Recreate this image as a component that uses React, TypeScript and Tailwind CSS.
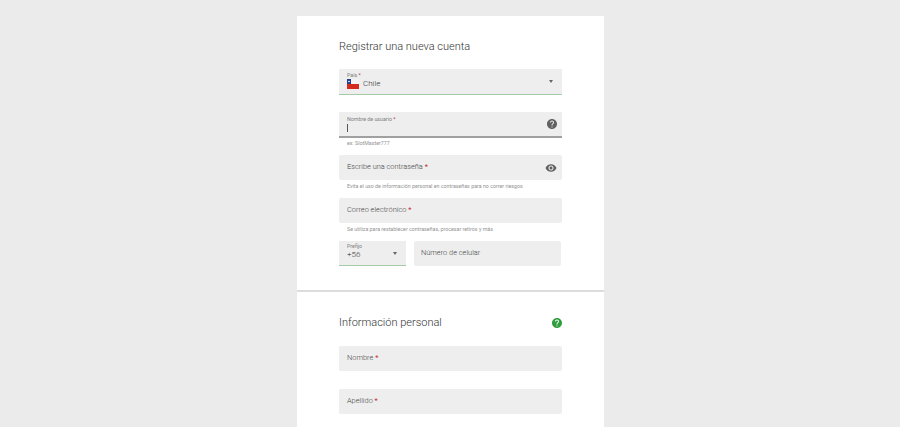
import { ReactNode } from "react";

function Req() {
  return <span className="font-normal text-[#c62828]"> *</span>;
}

function Help({ className }: { className: string }) {
  return (
    <svg viewBox="0 0 24 24" className={className} fill="currentColor">
      <path d="M12 2C6.48 2 2 6.48 2 12s4.48 10 10 10 10-4.48 10-10S17.52 2 12 2zm1 17h-2v-2h2v2zm2.07-7.75l-.9.92C13.45 12.9 13 13.5 13 15h-2v-.5c0-1.1.45-2.1 1.17-2.83l1.24-1.26c.37-.36.59-.86.59-1.41 0-1.1-.9-2-2-2s-2 .9-2 2H8c0-2.21 1.79-4 4-4s4 1.79 4 4c0 .88-.36 1.68-.93 2.25z" />
    </svg>
  );
}

function Eye() {
  return (
    <svg viewBox="0 0 24 24" className="h-[12px] w-[12px] text-[#616161]" fill="currentColor">
      <path d="M12 4.5C7 4.5 2.73 7.61 1 12c1.73 4.39 6 7.5 11 7.5s9.27-3.11 11-7.5c-1.73-4.39-6-7.5-11-7.5zM12 17c-2.76 0-5-2.24-5-5s2.24-5 5-5 5 2.24 5 5-2.24 5-5 5zm0-8c-1.66 0-3 1.34-3 3s1.34 3 3 3 3-1.34 3-3-1.34-3-3-3z" />
    </svg>
  );
}

function Caret() {
  return <span className="h-0 w-0 border-x-[2.5px] border-t-[3px] border-x-transparent border-t-[#666]" />;
}

function Flag() {
  return (
    <svg viewBox="0 0 12 10" className="h-[10px] w-[12px] shrink-0">
      <rect width="12" height="5" fill="#f2f2f2" />
      <rect y="5" width="12" height="5" fill="#d52b1e" />
      <rect width="4" height="5" fill="#1f3f94" />
      <circle cx="2" cy="2.5" r="0.8" fill="#fff" />
    </svg>
  );
}

function Field({ label, right, hint }: { label: string; right?: ReactNode; hint?: string }) {
  return (
    <div>
      <div className="flex h-[25px] items-center justify-between rounded-[2px] bg-[#eeeeee] pl-2 pr-[5px]">
        <span className="-mt-[1px] text-[7.4px] font-light text-[#444444]">
          {label}
          <Req />
        </span>
        {right}
      </div>
      {hint ? <p className="mt-[2px] pl-2 text-[5.3px] leading-[8px] text-[#949494]">{hint}</p> : null}
    </div>
  );
}

export default function App() {
  return (
    <div className="h-screen overflow-hidden bg-[#ebebeb] pt-4 font-['Roboto',sans-serif]">
      <div className="ml-[297px] h-[500px] w-[307px] bg-white">
        <section className="h-[276px] border-b-2 border-[#dcdcdc] px-[42px] pt-[23px]">
          <h1 className="text-[11px] font-light leading-[16px] text-[#333333]">Registrar una nueva cuenta</h1>

          <div className="mt-[14px] flex h-[26px] items-center justify-between border-b border-[#a3cba5] bg-[#eeeeee] pl-2 pr-[9px]">
            <div className="-mt-[3px]">
              <div className="text-[5.3px] leading-[6px] text-[#808080]">
                País
                <Req />
              </div>
              <div className="mt-[1px] flex items-center gap-1 text-[8px] font-light leading-[10px] text-[#333333]">
                <Flag />
                Chile
              </div>
            </div>
            <Caret />
          </div>

          <div className="mt-[17px]">
            <div className="flex h-[26px] items-center justify-between border-b-2 border-[#a0a0a0] bg-[#eeeeee] pl-2 pr-[5px]">
              <div>
                <div className="text-[5.3px] leading-[6px] text-[#808080]">
                  Nombre de usuario
                  <Req />
                </div>
                <div className="mt-[2px] h-[8px] w-px bg-[#555555]" />
              </div>
              <Help className="mr-[-1px] h-[12px] w-[12px] text-[#616161]" />
            </div>
            <p className="mt-[1px] pl-2 text-[5.3px] leading-[8px] text-[#949494]">ex: SlotMaster777</p>
          </div>

          <div className="mt-[8px]">
            <Field
              label="Escribe una contraseña"
              right={<Eye />}
              hint="Evita el uso de información personal en contraseñas para no correr riesgos"
            />
          </div>
          <div className="mt-[8px]">
            <Field label="Correo electrónico" hint="Se utiliza para restablecer contraseñas, procesar retiros y más" />
          </div>

          <div className="mt-[8px] flex gap-2">
            <div className="flex h-[25px] w-[67px] items-center justify-between border-b border-[#a3cba5] bg-[#eeeeee] pl-2 pr-[9px]">
              <div className="-mt-[3px]">
                <div className="text-[5.3px] leading-[6px] text-[#808080]">Prefijo</div>
                <div className="mt-[1px] text-[8px] font-light leading-[10px] text-[#333333]">+56</div>
              </div>
              <Caret />
            </div>
            <div className="flex h-[25px] w-[147px] items-center rounded-[2px] bg-[#eeeeee] pb-[1px] pl-[7px] text-[7.4px] font-light text-[#444444]">
              Número de celular
            </div>
          </div>
        </section>

        <section className="px-[42px] pt-[23px]">
          <div className="flex items-center justify-between">
            <h2 className="text-[11px] font-light leading-[16px] text-[#333333]">Información personal</h2>
            <Help className="mr-[-1px] h-[12px] w-[12px] text-[#2e9e3c]" />
          </div>
          <div className="mt-[15px]">
            <Field label="Nombre" />
          </div>
          <div className="mt-[18px]">
            <Field label="Apellido" />
          </div>
        </section>
      </div>
    </div>
  );
}
